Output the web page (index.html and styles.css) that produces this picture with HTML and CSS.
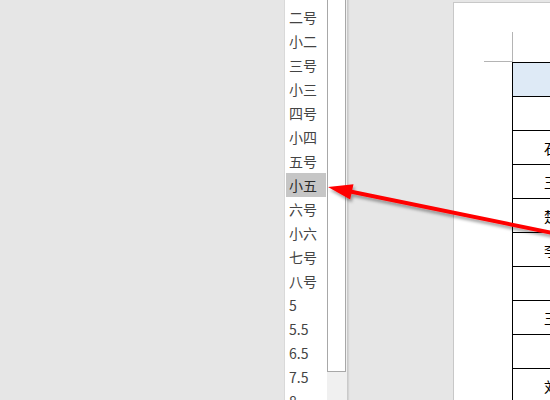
FILE: index.html
```html
<!DOCTYPE html>
<html lang="zh">
<head>
<meta charset="utf-8">
<link rel="stylesheet" href="styles.css">
</head>
<body>
<div class="workspace">
  <div class="side"></div>
  <div class="dropdown">
    <ul class="list">
      <li>二号</li>
      <li>小二</li>
      <li>三号</li>
      <li>小三</li>
      <li>四号</li>
      <li>小四</li>
      <li>五号</li>
      <li class="selected">小五</li>
      <li>六号</li>
      <li>小六</li>
      <li>七号</li>
      <li>八号</li>
      <li>5</li>
      <li>5.5</li>
      <li>6.5</li>
      <li>7.5</li>
      <li>8</li>
    </ul>
    <div class="scrollbar"><div class="thumb"></div></div>
  </div>
  <div class="gap"></div>
  <div class="page">
    <div class="margin-area">
      <div class="crop-mark"></div>
      <table class="doc-table">
        <tr class="head"><td></td><td></td><td></td></tr>
        <tr><td></td><td></td><td></td></tr>
        <tr><td>石磊</td><td></td><td></td></tr>
        <tr><td>王芳</td><td></td><td></td></tr>
        <tr><td>楚雄</td><td></td><td></td></tr>
        <tr><td>李明</td><td></td><td></td></tr>
        <tr><td></td><td></td><td></td></tr>
        <tr><td>王强</td><td></td><td></td></tr>
        <tr><td></td><td></td><td></td></tr>
        <tr><td>刘洋</td><td></td><td></td></tr>
      </table>
    </div>
  </div>
</div>
<svg class="arrow" width="550" height="400" viewBox="0 0 550 400">
  <defs>
    <filter id="shadow" x="-10%" y="-50%" width="120%" height="200%">
      <feDropShadow dx="1.5" dy="3" stdDeviation="1.6" flood-color="#000" flood-opacity="0.35"/>
    </filter>
  </defs>
  <g filter="url(#shadow)">
    <line x1="349" y1="191.3" x2="560" y2="234.5" stroke="#ff0000" stroke-width="4"/>
    <polygon points="328,187 353.5,184.2 350.2,199.4" fill="#ff0000"/>
  </g>
</svg>
</body>
</html>
```
FILE: styles.css
```css
html, body {
  margin: 0;
  padding: 0;
}
body {
  width: 550px;
  height: 400px;
  overflow: hidden;
  background: #e6e6e6;
  position: relative;
  font-family: "Noto Sans CJK SC", "Noto Sans", sans-serif;
}
.workspace {
  display: flex;
  height: 400px;
  overflow: hidden;
}
.side {
  width: 284px;
  flex: none;
}
.dropdown {
  box-sizing: border-box;
  width: 64px;
  flex: none;
  display: flex;
  background: #ffffff;
  border-left: 1px solid #d9d9d9;
  border-right: 1px solid #cacaca;
  box-shadow: 1px 0 1px rgba(0, 0, 0, 0.08);
  overflow: hidden;
}
.list {
  list-style: none;
  margin: 0;
  padding: 5px 0 0 0;
  width: 42px;
  flex: none;
}
.list li {
  height: 24px;
  line-height: 24px;
  margin: 0 1px;
  padding-left: 3px;
  font-size: 14px;
  color: #444444;
  white-space: nowrap;
}
.list li.selected {
  background: #c6c6c6;
  color: #2a2a2a;
}
.scrollbar {
  width: 20px;
  flex: none;
  background: #f0f0f0;
}
.thumb {
  box-sizing: border-box;
  width: 19px;
  height: 372px;
  background: #ffffff;
  border: 1px solid #a8a8a8;
  border-top: 0;
}
.gap {
  width: 105px;
  flex: none;
}
.page {
  flex: 1;
  margin-top: 2px;
  background: #ffffff;
  border-left: 1px solid #c8c8c8;
  border-top: 1px solid #c8c8c8;
  overflow: hidden;
}
.margin-area {
  padding: 29px 0 0 30px;
}
.crop-mark {
  width: 28px;
  height: 29px;
  border-right: 1px solid #b4b4b4;
  border-bottom: 1px solid #b4b4b4;
}
.doc-table {
  margin-left: 28px;
  border-collapse: collapse;
  table-layout: fixed;
  width: 260px;
}
.doc-table td {
  width: 90px;
  height: 33px;
  padding: 0;
  border: 1px solid #000000;
  text-align: center;
  vertical-align: middle;
  font-size: 14px;
  line-height: 18px;
  color: #000000;
  white-space: nowrap;
}
.doc-table tr.head td {
  background: #deeaf6;
}
.arrow {
  position: absolute;
  left: 0;
  top: 0;
  pointer-events: none;
}
```
